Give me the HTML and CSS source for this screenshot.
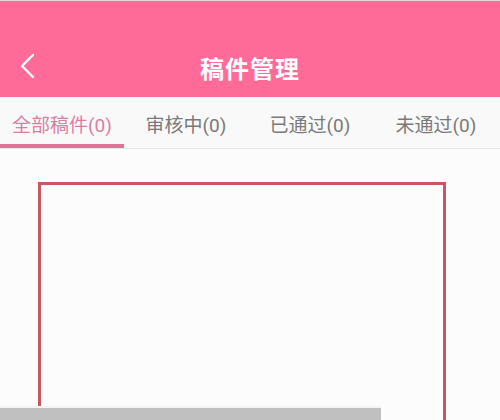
FILE: index.html
```html
<!DOCTYPE html>
<html lang="zh">
<head>
<meta charset="utf-8">
<link rel="stylesheet" href="styles.css">
</head>
<body>
<div class="page">
  <header class="header">
    <div class="bar">
      <svg class="back" width="16" height="26" viewBox="0 0 16 26"><path d="M14 2 L3 13 L14 24" fill="none" stroke="#fff" stroke-width="2.4" stroke-linecap="round" stroke-linejoin="round"/></svg>
      <h1 class="title">稿件管理</h1>
    </div>
  </header>
  <nav class="tabs">
    <div class="tab active">全部稿件(0)</div>
    <div class="tab">审核中(0)</div>
    <div class="tab">已通过(0)</div>
    <div class="tab">未通过(0)</div>
  </nav>
  <main class="content">
    <div class="frame"></div>
  </main>
  <div class="toast"></div>
</div>
</body>
</html>
```
FILE: styles.css
```css
html, body {
  margin: 0;
  padding: 0;
}
body {
  font-family: "Roboto", "Noto Sans CJK SC", sans-serif;
  background: #fcfcfc;
  width: 500px;
  height: 420px;
  overflow: hidden;
}
.page {
  position: relative;
  height: 420px;
  display: flex;
  flex-direction: column;
}
.header {
  flex-shrink: 0;
  background: #fe6b98;
  height: 97px;
  padding-top: 38px;
  box-sizing: border-box;
  border-top: 1px solid #e8d9de;
}
.bar {
  position: relative;
  height: 56px;
  display: flex;
  align-items: center;
  justify-content: center;
}
.back {
  position: absolute;
  left: 19px;
  top: 14px;
}
.title {
  margin: 0;
  color: #fff;
  font-size: 24px;
  font-weight: 700;
  letter-spacing: 1px;
  font-family: "Noto Sans CJK SC", sans-serif;
}
.tabs {
  flex-shrink: 0;
  display: grid;
  grid-template-columns: 124px 124px 124px 128px;
  height: 52px;
  box-sizing: border-box;
  background: #f9f9f9;
  border-bottom: 1px solid #e6e6e6;
}
.tab {
  display: flex;
  align-items: center;
  justify-content: center;
  font-size: 19px;
  color: #7a7a7a;
  font-family: "Roboto", "Noto Sans CJK SC", sans-serif;
  box-sizing: border-box;
  padding-top: 2px;
}
.tab.active {
  color: #d97ea3;
  border-bottom: 4px solid #e07198;
  padding-top: 6px;
}
.content {
  flex: 1;
  min-height: 0;
  overflow: hidden;
  padding: 33px 0 0 38px;
  background: #fcfcfc;
}
.frame {
  width: 402px;
  height: 260px;
  border: 3px solid #c8575f;
  border-bottom: none;
}
.toast {
  position: absolute;
  left: 0;
  bottom: 0;
  width: 381px;
  height: 12px;
  background: #c0c0c0;
  border-top: 2px solid #f3f3f3;
}
```
